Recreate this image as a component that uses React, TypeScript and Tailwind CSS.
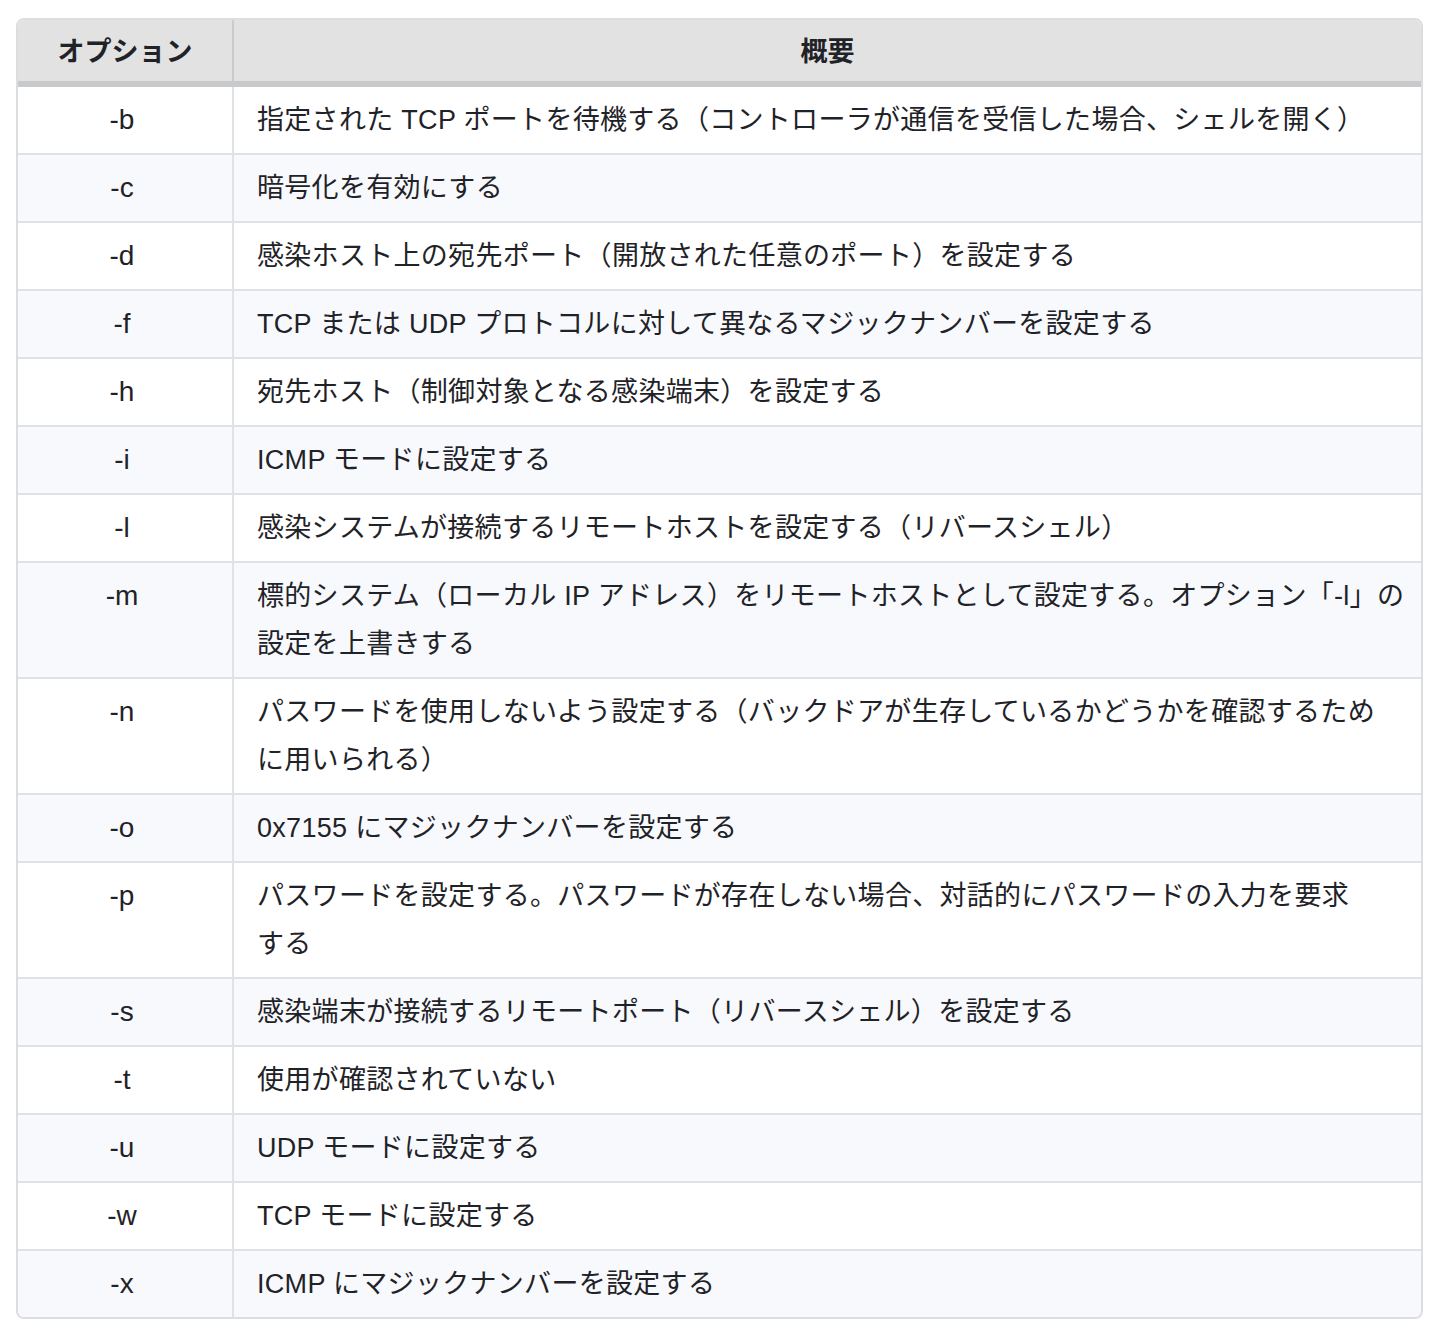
const rows: [string, React.ReactNode][] = [
  ["-b", "指定された TCP ポートを待機する（コントローラが通信を受信した場合、シェルを開く）"],
  ["-c", "暗号化を有効にする"],
  ["-d", "感染ホスト上の宛先ポート（開放された任意のポート）を設定する"],
  ["-f", "TCP または UDP プロトコルに対して異なるマジックナンバーを設定する"],
  ["-h", "宛先ホスト（制御対象となる感染端末）を設定する"],
  ["-i", "ICMP モードに設定する"],
  ["-l", "感染システムが接続するリモートホストを設定する（リバースシェル）"],
  ["-m", <>標的システム（ローカル IP アドレス）をリモートホストとして設定する。オプション「-l」の<br />設定を上書きする</>],
  ["-n", <>パスワードを使用しないよう設定する（バックドアが生存しているかどうかを確認するため<br />に用いられる）</>],
  ["-o", "0x7155 にマジックナンバーを設定する"],
  ["-p", <>パスワードを設定する。パスワードが存在しない場合、対話的にパスワードの入力を要求<br />する</>],
  ["-s", "感染端末が接続するリモートポート（リバースシェル）を設定する"],
  ["-t", "使用が確認されていない"],
  ["-u", "UDP モードに設定する"],
  ["-w", "TCP モードに設定する"],
  ["-x", "ICMP にマジックナンバーを設定する"],
];

export default function App() {
  return (
    <div className="min-h-screen bg-white pt-[18px] pl-4 pr-[19px] font-['Liberation_Sans','Noto_Sans_CJK_JP',sans-serif] text-[27px] leading-[48px] text-[#1f2328]">
      <div className="overflow-hidden rounded-lg border-2 border-[#dcdddf]">
        <table className="w-full border-collapse">
          <thead>
            <tr className="bg-[#e2e2e2]">
              <th className="w-[215px] border-r-2 border-b-[6px] border-r-[#cbcbcb] border-b-[#c8c9cb] pt-[8px] pb-[5px] text-center font-bold">オプション</th>
              <th className="border-b-[6px] border-b-[#c8c9cb] pt-[8px] pb-[5px] text-center font-bold">概要</th>
            </tr>
          </thead>
          <tbody>
            {rows.map(([opt, desc], i) => (
              <tr key={opt} className={i % 2 === 1 ? "bg-[#f8f9fd]" : "bg-white"}>
                <td className={`border-r-2 border-[#e1e2e4] py-[9px] pr-[6px] text-center align-top text-[28px] ${i > 0 ? "border-t-2" : ""}`}>{opt}</td>
                <td className={`border-[#e1e2e4] py-[9px] pl-[23px] pr-[10px] align-top tracking-[0.3px] ${i > 0 ? "border-t-2" : ""}`}>{desc}</td>
              </tr>
            ))}
          </tbody>
        </table>
      </div>
    </div>
  );
}
